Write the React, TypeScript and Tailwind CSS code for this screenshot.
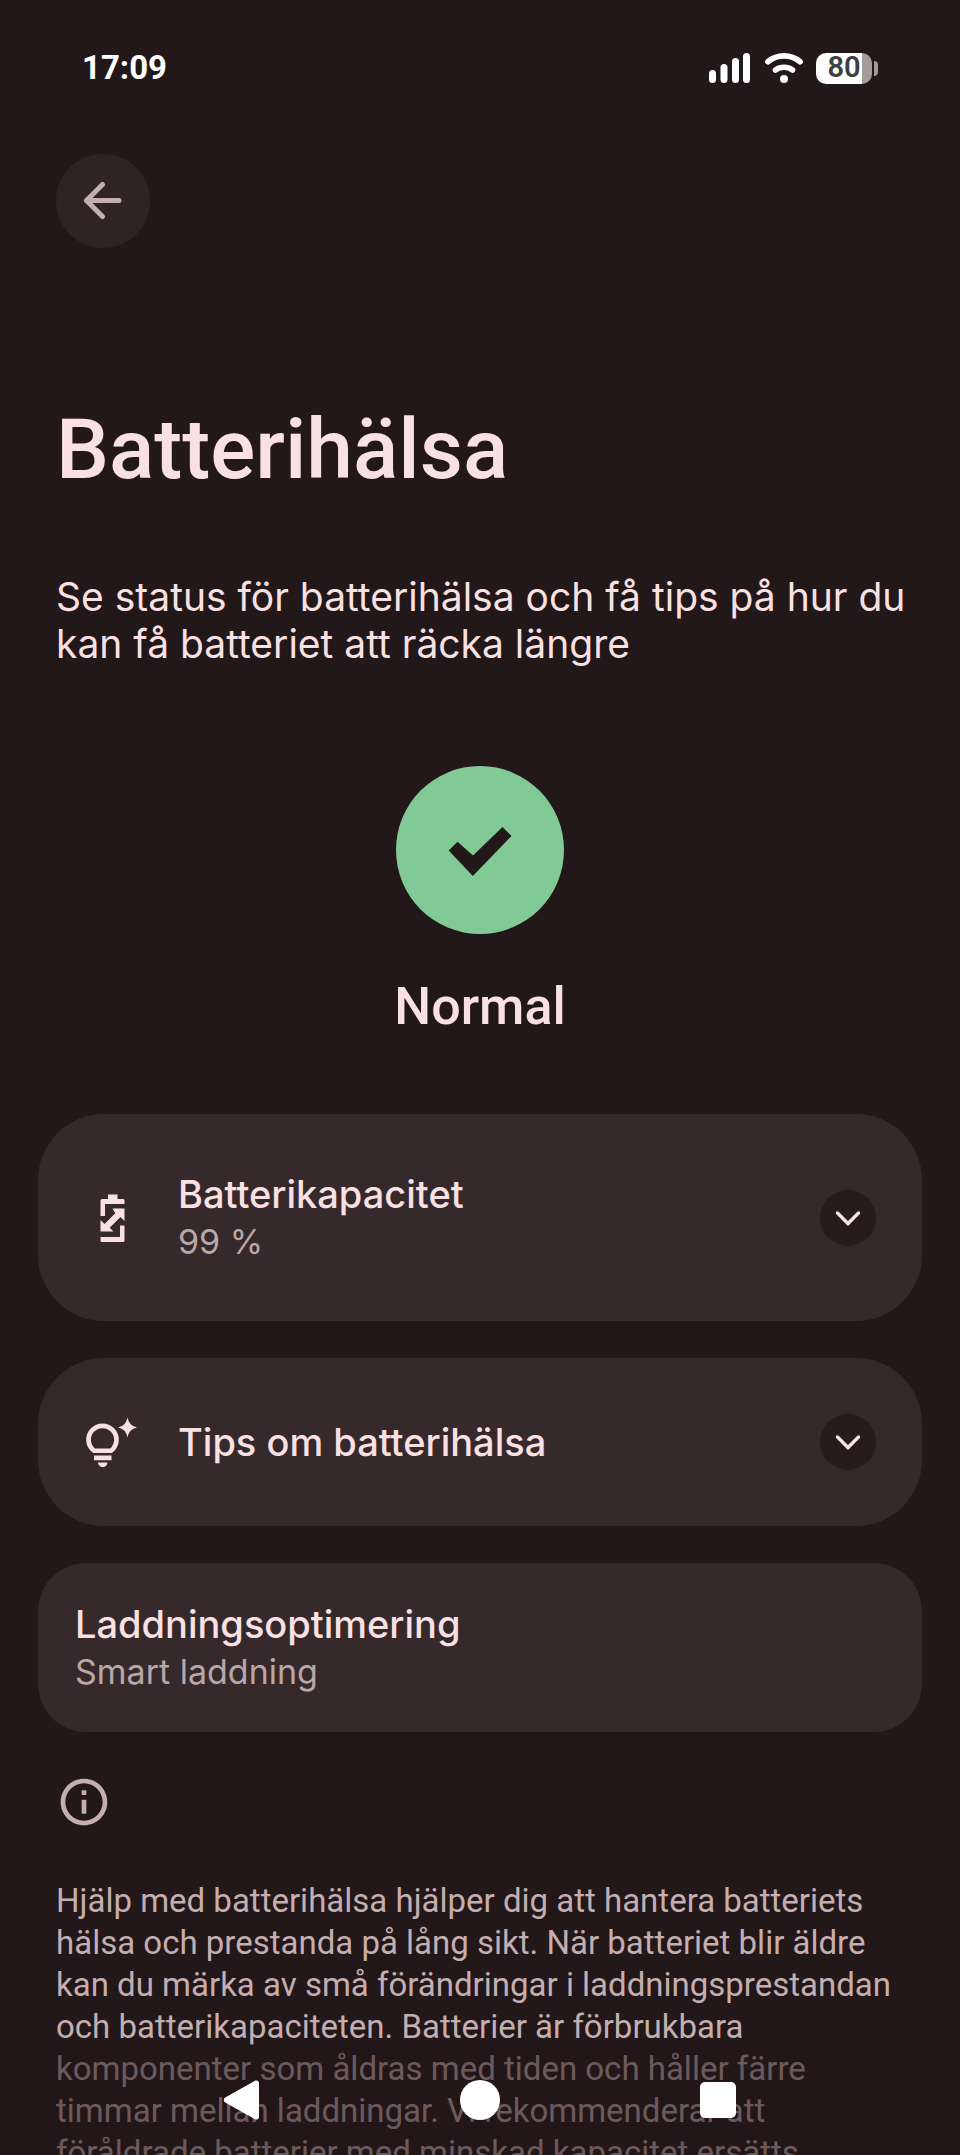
import { useState, type ReactNode } from 'react'

interface ExpandableCardProps {
  icon: ReactNode
  title: string
  summary?: string
}

function SignalIcon() {
  return (
    <svg className="h-8 w-11" viewBox="0 0 44 32" fill="#fff" aria-hidden="true">
      <rect x="1" y="18" width="7" height="13" rx="3.5" />
      <rect x="12.5" y="12" width="7" height="19" rx="3.5" />
      <rect x="24" y="6" width="7" height="25" rx="3.5" />
      <rect x="35" y="1" width="7" height="30" rx="3.5" />
    </svg>
  )
}

function WifiIcon() {
  return (
    <svg className="h-8 w-10" viewBox="0 0 40 32" fill="none" stroke="#fff" strokeWidth="5.6" strokeLinecap="round" aria-hidden="true">
      <path d="M3.8 9.8C13 1.9 27 1.9 36.2 9.8" />
      <path d="M11.5 18C16.5 14.3 23.5 14.3 28.5 18" />
      <circle cx="20" cy="27" r="4" fill="#fff" stroke="none" />
    </svg>
  )
}

function BatteryStatus() {
  return (
    <div className="flex items-center gap-0.5" role="img" aria-label="Batteri 80 %">
      <div className="flex h-[31px] w-14 items-center justify-center rounded-[10px] bg-linear-to-r from-white from-83% to-[#a19d9d] to-83% text-[29px] font-semibold text-[#3c4043]">
        80
      </div>
      <div className="h-[15px] w-1 rounded-r bg-[#a19d9d]" />
    </div>
  )
}

function BatteryChangeIcon() {
  return (
    <svg className="size-14" viewBox="0 0 56 56" fill="currentColor" aria-hidden="true">
      <path d="M24 4.5h9.5V9H39a1.5 1.5 0 0 1 1.5 1.5V14H21v12h-4.500V10.500A1.500 1.500 0 0 1 18 9h6z" />
      <path d="M28.500 18.500h12V31l-4-4-10.800 10.800 3.800 3.700h-13V30l4 4 10.800-10.800z" />
      <path d="M36 35.500h4.500v15A1.500 1.500 0 0 1 39 52H18a1.500 1.500 0 0 1-1.500-1.500V47H36z" />
    </svg>
  )
}

function TipsIcon() {
  return (
    <svg className="size-14" viewBox="0 0 56 56" fill="currentColor" aria-hidden="true">
      <path
        fillRule="evenodd"
        d="M18.500 9.500a16.300 16.300 0 0 1 16.300 16.300c0 5.500-2.700 10.400-7 13.200H9.200a16 16 0 0 1-7-13.200A16.300 16.300 0 0 1 18.500 9.500zm0 4.700A11.600 11.600 0 0 0 6.900 25.800c0 3.500 1.500 6.500 3.900 8.600h15.400a11.500 11.500 0 0 0 3.900-8.600A11.600 11.600 0 0 0 18.500 14.200z"
      />
      <path d="M10 41.500h17.500v4.700H10zM14 48.500h9.500a4.700 4.700 0 0 1-9.500 0z" />
      <path d="M43.500 3.500Q45 12 53 13.500Q45 15 43.500 23.500Q42 15 34 13.500Q42 12 43.500 3.500z" />
    </svg>
  )
}

function ExpandableCard({ icon, title, summary }: ExpandableCardProps) {
  const [open, setOpen] = useState(false)

  return (
    <button
      type="button"
      aria-expanded={open}
      onClick={() => setOpen(!open)}
      className="flex w-full items-center rounded-[66px] bg-[#36292b] px-[46px] py-14 text-left font-['Inter',sans-serif]"
    >
      <span className="mr-[38px] shrink-0 text-[#f9e0e2]">{icon}</span>
      <span className="flex-1">
        <span className="block text-[38px] leading-[48px] font-medium text-[#f9e0e2]">{title}</span>
        {summary && <span className="block text-[34px] leading-[47px] text-[#b9a7a9]">{summary}</span>}
      </span>
      <span className="flex size-14 shrink-0 items-center justify-center rounded-full bg-[#261b1d]">
        <svg className="h-4 w-7" viewBox="0 0 28 16" fill="none" stroke="#f9e0e2" strokeWidth="3.4" strokeLinecap="round" aria-hidden="true">
          <path d="M3.5 3L14 13.5L24.5 3" />
        </svg>
      </span>
    </button>
  )
}

function NavigationBar() {
  return (
    <nav className="absolute inset-x-0 bottom-0 flex h-[111px] items-center justify-center gap-[198px] bg-[#231618]/55">
      <button type="button" aria-label="Tillbaka">
        <svg className="size-10" viewBox="0 0 40 40" fill="#fff" aria-hidden="true">
          <path d="M3.300 17.500L33 .8c2-1.100 4 .2 4 2.200v34c0 2-2 3.300-4 2.200L3.300 22.500c-2-1.100-2-3.900 0-5z" />
        </svg>
      </button>
      <button type="button" aria-label="Startsida" className="size-10 rounded-full bg-white" />
      <button type="button" aria-label="Senaste appar" className="flex size-10 items-center justify-center">
        <span className="size-9 rounded-[5px] bg-white" />
      </button>
    </nav>
  )
}

export default function App() {
  return (
    <div className="relative h-screen overflow-hidden bg-[#221719] font-['Roboto','Open_Sans',sans-serif] text-[#f9e0e2]">
      <div className="h-full overflow-y-auto [scrollbar-width:none]">
        <header className="pt-12">
          <div className="flex h-10 items-center justify-between px-[82px] text-white">
            <time className="text-[33px] font-bold">17:09</time>
            <div className="flex items-center gap-3">
              <SignalIcon />
              <WifiIcon />
              <BatteryStatus />
            </div>
          </div>
          <div className="px-14 pt-[66px]">
            <button
              type="button"
              aria-label="Tillbaka"
              className="flex size-[94px] items-center justify-center rounded-full bg-[#2f2325]"
            >
              <svg className="size-10" viewBox="0 0 40 40" fill="none" stroke="#c4aeb0" strokeWidth="5" strokeLinecap="round" strokeLinejoin="round" aria-hidden="true">
                <path d="M19.500 3.500L3.500 19.500L19.500 35.500M3.500 19.500H36" />
              </svg>
            </button>
          </div>
        </header>

        <main className="pb-28">
          <section className="pt-[152px] pr-10 pl-14">
            <h1 className="text-[84px] leading-[100px] font-medium">Batterihälsa</h1>
            <p className="mt-[73px] font-['Inter',sans-serif] text-[39px] leading-[47px]">
              Se status för batterihälsa och få tips på hur du kan få batteriet att räcka längre
            </p>
          </section>

          <section className="flex flex-col items-center pt-[99px]">
            <div className="size-[168px] rounded-full bg-[#81c995]">
              <svg viewBox="0 0 168 168" fill="#221719" aria-hidden="true">
                <path d="M52.700 84.500L61.500 75.700L77 89.500L106.500 61L115.500 70L76.800 110z" />
              </svg>
            </div>
            <h2 className="mt-[41px] text-[52px] leading-[64px] font-medium">Normal</h2>
          </section>

          <section className="flex flex-col gap-[37px] px-[38px] pt-[75px]">
            <ExpandableCard icon={<BatteryChangeIcon />} title="Batterikapacitet" summary="99 %" />
            <ExpandableCard icon={<TipsIcon />} title="Tips om batterihälsa" />
            <button type="button" className="rounded-[48px] bg-[#36292b] p-[37px] text-left font-['Inter',sans-serif]">
              <span className="block text-[38px] leading-[48px] font-medium">Laddningsoptimering</span>
              <span className="block text-[34px] leading-[47px] text-[#b9a7a9]">Smart laddning</span>
            </button>
          </section>

          <footer className="px-14 pt-[42px] text-[#c4aeb0]">
            <svg className="size-14" viewBox="0 0 24 24" fill="currentColor" aria-hidden="true">
              <path d="M11 7h2v2h-2zm0 4h2v6h-2zm1-9C6.480 2 2 6.480 2 12s4.480 10 10 10 10-4.480 10-10S17.520 2 12 2zm0 18c-4.410 0-8-3.590-8-8s3.590-8 8-8 8 3.590 8 8-3.590 8-8 8z" />
            </svg>
            <p className="mt-[50px] text-[33px] leading-[42px]">
              Hjälp med batterihälsa hjälper dig att hantera batteriets hälsa och prestanda på lång sikt. När
              batteriet blir äldre kan du märka av små förändringar i laddningsprestandan och
              batterikapaciteten. Batterier är förbrukbara komponenter som åldras med tiden och håller färre
              timmar mellan laddningar. Vi rekommenderar att föråldrade batterier med minskad kapacitet ersätts
            </p>
          </footer>
        </main>
      </div>
      <NavigationBar />
    </div>
  )
}
